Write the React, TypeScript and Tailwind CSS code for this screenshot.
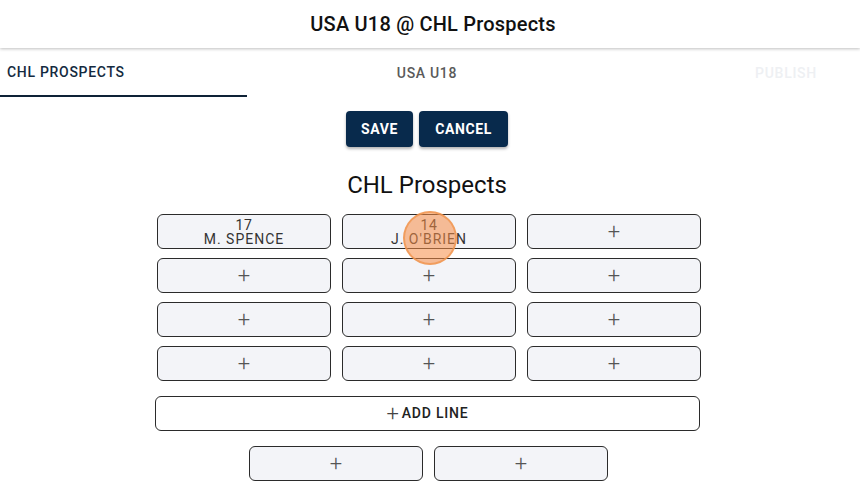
import React from "react";

const font = { fontFamily: "Roboto, 'Noto Sans', sans-serif" };

function Cell({ num, name }: { num?: string; name?: string }) {
  return (
    <div className="h-[35px] rounded-[6px] border border-[#2b2b2b] bg-[#f3f4f8] flex flex-col items-center justify-center text-[#333] leading-[14px]">
      {name ? (
        <>
          <span className="text-[14px] tracking-[0.6px]">{num}</span>
          <span className="text-[14px] tracking-[1px]">{name}</span>
        </>
      ) : (
        <span className="text-[22px] font-light text-[#555] leading-none">+</span>
      )}
    </div>
  );
}

export default function App() {
  return (
    <div className="w-[860px] h-[481px] bg-white overflow-hidden relative" style={font}>
      <div className="h-[48px] flex items-center justify-center shadow-[0_1px_3px_rgba(0,0,0,0.25)] relative z-10">
        <span className="text-[20px] font-medium text-[#111] tracking-[0.2px] pl-[6px]">USA U18 @ CHL Prospects</span>
      </div>
      <div className="flex h-[49px] text-[14px] tracking-[0.7px]">
        <div className="w-[247px] flex flex-col">
          <div className="flex-1 flex items-center pl-[7px] pt-[1px] text-[#142a40] font-medium">CHL PROSPECTS</div>
          <div className="h-[2px] bg-[#0e2236]" />
        </div>
        <div className="w-[360px] flex items-center justify-center pt-[1px] text-[#5a5a5a] font-medium">USA U18</div>
        <div className="w-[105px]" />
        <div className="w-[148px] flex items-center justify-center pt-[1px] text-[#eef0f3] font-medium">PUBLISH</div>
      </div>
      <div className="flex gap-[6px] mt-[14px] ml-[346px]">
        <button className="h-[36px] w-[67px] rounded-[4px] bg-[#082a4c] text-white text-[14px] font-bold tracking-[0.6px] shadow-[0_2px_3px_rgba(0,0,0,0.3)]">SAVE</button>
        <button className="h-[36px] w-[89px] rounded-[4px] bg-[#082a4c] text-white text-[14px] font-bold tracking-[0.6px] shadow-[0_2px_3px_rgba(0,0,0,0.3)]">CANCEL</button>
      </div>
      <div className="w-[854px] text-center text-[24px] text-[#111] mt-[24px] leading-[28px]">CHL Prospects</div>
      <div className="w-[544px] ml-[157px] mt-[15px] grid grid-cols-3 gap-x-[11px] gap-y-[9px]">
        <Cell num="17" name="M. SPENCE" />
        <Cell num="14" name="J. O'BRIEN" />
        <Cell />
        <Cell />
        <Cell />
        <Cell />
        <Cell />
        <Cell />
        <Cell />
        <Cell />
        <Cell />
        <Cell />
      </div>
      <div className="w-[545px] ml-[155px] mt-[15px]">
        <div className="h-[35px] rounded-[6px] border border-[#2b2b2b] bg-white flex items-center justify-center text-[14px] font-medium tracking-[0.8px] text-[#222]">
          <span className="text-[22px] font-light text-[#444] leading-none mr-[2px]">+</span>ADD LINE
        </div>
      </div>
      <div className="flex gap-[11px] mt-[15px] ml-[249px]">
        <div className="w-[174px]"><Cell /></div>
        <div className="w-[174px]"><Cell /></div>
      </div>
      <div className="absolute left-[403px] top-[211px] w-[54px] h-[54px] rounded-full bg-[rgba(245,140,70,0.55)] border-2 border-[rgba(240,150,80,0.8)]" />
    </div>
  );
}
